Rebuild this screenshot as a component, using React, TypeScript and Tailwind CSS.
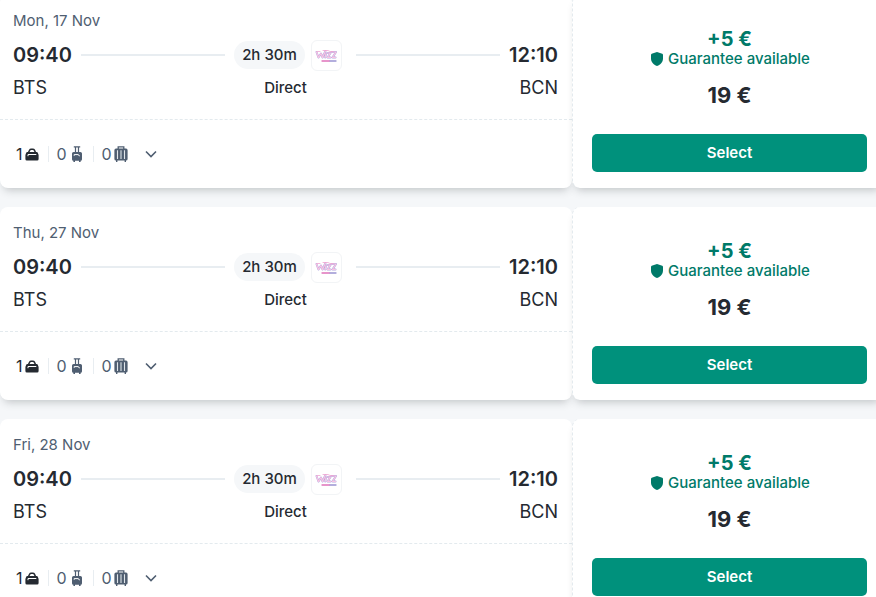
type Trip = {
  date: string;
  departure: string;
  arrival: string;
  from: string;
  to: string;
  duration: string;
  stops: string;
  price: number;
  guarantee: number;
};

const route = {
  departure: "09:40",
  arrival: "12:10",
  from: "BTS",
  to: "BCN",
  duration: "2h 30m",
  stops: "Direct",
  price: 19,
  guarantee: 5,
};

const trips: Trip[] = [
  { date: "Mon, 17 Nov", ...route },
  { date: "Thu, 27 Nov", ...route },
  { date: "Fri, 28 Nov", ...route },
];

function PersonalItemIcon() {
  return (
    <svg className="h-4 w-4" viewBox="0 0 16 16" fill="none">
      <path d="M4.500 6.500 5.600 4.200Q6.100 3.200 7.200 3.200h1.600q1.100 0 1.600 1l1.100 2.300" stroke="currentColor" strokeWidth="1.500" />
      <path d="M3.400 6h9.200q1 0 1.300.9l.7 2v4.100q0 1.500-1.400 1.500H2.800q-1.400 0-1.400-1.500V8.900l.7-2q.3-.9 1.300-.9z" fill="currentColor" />
      <path d="M4 10.200V8.500h8.300" stroke="#fff" strokeWidth="1" />
    </svg>
  );
}

function CabinBagIcon() {
  return (
    <svg className="h-4 w-4" viewBox="0 0 16 16" fill="none">
      <path d="M4.800.8h6.400M6.500 1v6M9.500 1v6" stroke="currentColor" strokeWidth="1.200" />
      <path d="M4.600 6h6.800q1.600 0 1.600 1.600v5.600q0 1.500-1.400 1.500v1.200h-1.600v-1.200H6v1.200H4.400v-1.200Q3 14.700 3 13.200V7.600Q3 6 4.600 6z" fill="currentColor" />
      <path d="M5.200 9.800V8.600h4.200q0 1.300 1.400 1.300" stroke="#fff" strokeWidth="1" />
    </svg>
  );
}

function CheckedBagIcon() {
  return (
    <svg className="h-4 w-4" viewBox="0 0 16 16" fill="none">
      <path d="M5.200 3V.9h5.600V3" stroke="currentColor" strokeWidth="1.300" />
      <path d="M3 2.600h10q1.600 0 1.600 1.600v8.800q0 1.600-1.600 1.600v1.300h-1.400v-1.300H4.400v1.300H3v-1.300q-1.600 0-1.600-1.600V4.200q0-1.600 1.600-1.600z" fill="currentColor" />
      <path d="M4.500 4.300v8.800M8 4.300v8.800M11.500 4.300v8.800" stroke="#dfe5ea" strokeWidth="1.100" />
    </svg>
  );
}

function ShieldIcon() {
  return (
    <svg className="h-4 w-4" viewBox="0 0 16 16" fill="currentColor">
      <path d="M8 1 13.300 2.800q.7.250.7 1v3.700c0 3.600-2.300 6.200-6 7.500-3.700-1.300-6-3.900-6-7.500V3.800q0-.75.7-1z" />
    </svg>
  );
}

function CarrierLogo() {
  return (
    <svg className="h-7 w-7" viewBox="0 0 28 28" fill="none" role="img" aria-label="Wizz Air">
      <g strokeLinecap="round" strokeLinejoin="round">
        <path
          d="m4.500 11 2 5.500L9 12.500l1.500 4L13.500 10M14 12.500l-.8 4M15.500 12h3l-3 4.500h3M19.500 11h4.500l-3.500 5.500h3"
          stroke="#b3a9e0"
          strokeWidth="2"
        />
        <path
          d="m4.500 11 2 5.500L9 12.500l1.500 4L13.500 10M14 12.500l-.8 4M15.500 12h3l-3 4.500h3M19.500 11h4.500l-3.500 5.500h3"
          stroke="#f9c3e2"
          strokeWidth="1.200"
        />
        <path d="M5 10.500h3M11 9.500h5l2 1h3" stroke="#f0a3d2" strokeWidth="0.800" />
        <path d="M10 20h7.500" stroke="#df73bb" strokeWidth="1.300" />
        <path d="M18 20h6" stroke="#9a94d2" strokeWidth="1.300" />
      </g>
    </svg>
  );
}

function Baggage() {
  return (
    <div className="flex items-center py-[22px] pl-4 text-base text-[#4f5e71]">
      <span className="flex items-center gap-px text-[#252a31]">
        1<PersonalItemIcon />
      </span>
      <span className="mx-2 h-4 w-px bg-[#e8edf1]" />
      <span className="flex items-center gap-[2px]">
        0<CabinBagIcon />
      </span>
      <span className="mx-2 h-4 w-px bg-[#e8edf1]" />
      <span className="flex items-center gap-px">
        0<CheckedBagIcon />
      </span>
      <button type="button" aria-label="Show baggage details" className="ml-[10px] flex h-6 w-6 items-center justify-center">
        <svg className="h-4 w-4" viewBox="0 0 16 16" fill="none" stroke="currentColor" strokeWidth="1.600">
          <path d="m3 5.500 5 5 5-5" />
        </svg>
      </button>
    </div>
  );
}

function TripCard({ trip }: { trip: Trip }) {
  return (
    <article className="flex">
      <div className="min-w-0 flex-1 rounded-lg bg-white shadow-[0_6px_8px_-4px_rgba(37,42,49,0.25)]">
        <div className="border-b border-dashed border-[#e3eaee] pt-4 pr-[14px] pb-[17px] pl-[13px]">
          <p className="text-[15px] leading-5 text-[#4f5e71]">{trip.date}</p>
          <div className="mt-[9px] flex h-[30px] items-center">
            <span className="text-xl font-semibold">{trip.departure}</span>
            <span className="mx-[9px] h-[2px] flex-1 bg-[#e8edf1]" />
            <span className="rounded-full bg-[#f5f7f9] px-2 text-[15px] leading-7 font-medium">{trip.duration}</span>
            <span className="ml-[6px] flex h-[31px] w-[31px] items-center justify-center rounded-md border border-[#f2f4f6]">
              <CarrierLogo />
            </span>
            <span className="mr-[9px] ml-[14px] h-[2px] flex-1 bg-[#e8edf1]" />
            <span className="text-xl font-semibold">{trip.arrival}</span>
          </div>
          <div className="mt-1 grid grid-cols-3 items-center leading-7">
            <span className="text-lg leading-7">{trip.from}</span>
            <span className="text-center text-[15px] leading-7 font-medium">{trip.stops}</span>
            <span className="text-right text-lg leading-7">{trip.to}</span>
          </div>
        </div>
        <Baggage />
      </div>

      <div className="w-[312px] rounded-lg border-l border-dashed border-[#e3eaee] bg-white pt-8 pr-[17px] pb-4 pl-[19px] text-center shadow-[0_6px_8px_-4px_rgba(37,42,49,0.25)]">
        <p className="text-xl leading-6 font-bold text-[#007a69]">+{trip.guarantee} €</p>
        <p className="flex items-center justify-center gap-[3px] text-[15px] leading-4 font-medium text-[#007a69]">
          <ShieldIcon />
          Guarantee available
        </p>
        <p className="mt-4 text-[22px] leading-6 font-bold">{trip.price} €</p>
        <button type="button" className="mt-[27px] h-[38px] w-full rounded-[5px] bg-[#00917c] text-[15px] font-semibold text-white">
          Select
        </button>
      </div>
    </article>
  );
}

export default function App() {
  return (
    <main className="h-screen overflow-hidden bg-[#f5f7f9] font-['Inter',sans-serif] text-[#252a31]">
      <div className="-mt-[5px] -mr-2 flex flex-col gap-[19px]">
        {trips.map((trip) => (
          <TripCard key={trip.date} trip={trip} />
        ))}
      </div>
    </main>
  );
}
